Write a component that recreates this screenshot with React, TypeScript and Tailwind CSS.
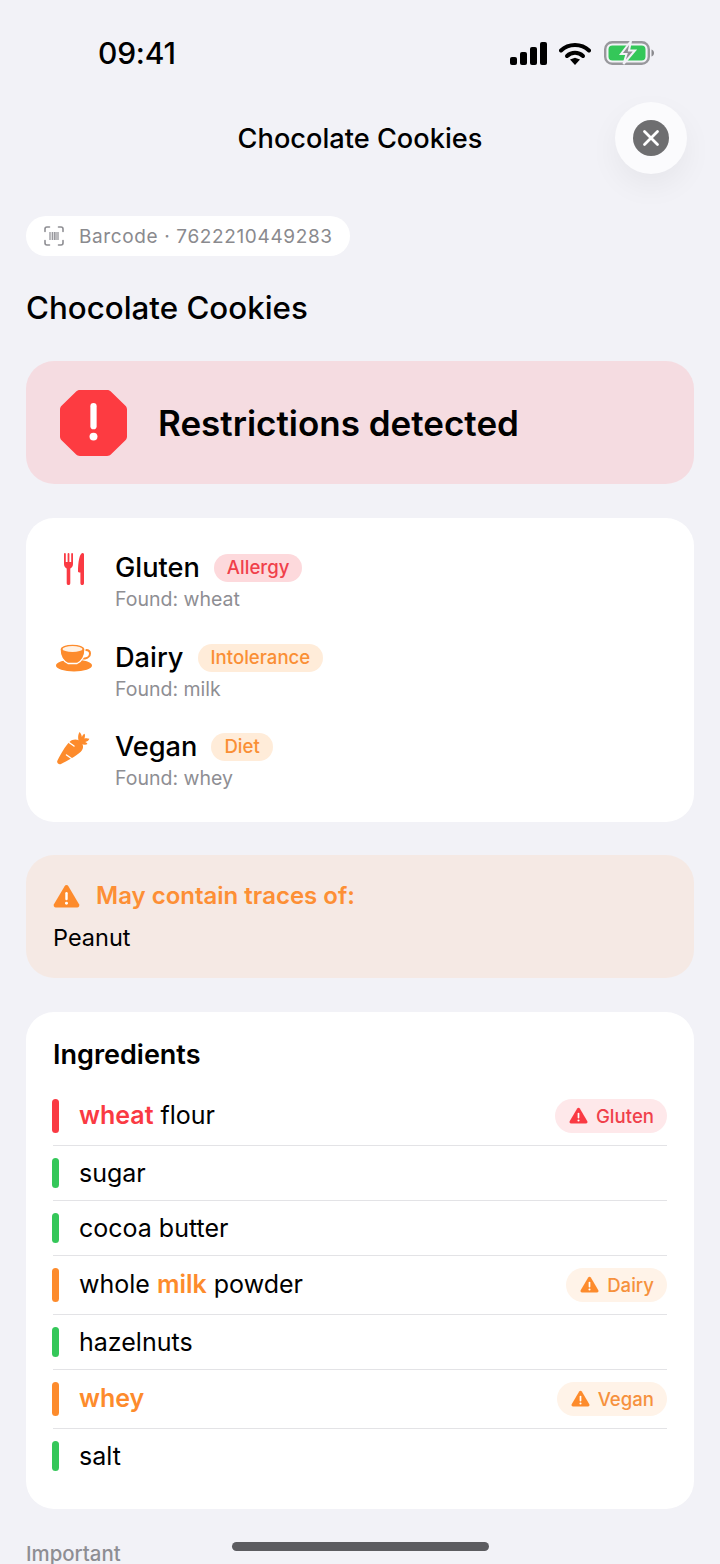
import React from "react";

const RED = "#fa3a43";
const ORANGE = "#fd8b2c";
const GREEN = "#34c759";

function Tri({ color, size = 20 }: { color: string; size?: number }) {
  return (
    <svg width={size} height={size * 0.9} viewBox="0 0 20 18" className="shrink-0">
      <path d="M10 .8c.6 0 1.100.3 1.400.8l7.900 13.400c.6 1.100-.2 2.400-1.400 2.400H2.100c-1.200 0-2-1.300-1.400-2.400L8.600 1.600c.3-.5.8-.8 1.400-.8z" fill={color} />
      <rect x="9.100" y="6" width="1.800" height="6" rx="0.9" fill="#fff" />
      <circle cx="10" cy="14.300" r="1.100" fill="#fff" />
    </svg>
  );
}

function Fork() {
  return (
    <svg width="20" height="32" viewBox="0 0 20 32" className="ml-[8px]">
      <path d="M0 1a.9.9 0 0 1 1.800 0V9h1.800V1a.9.9 0 0 1 1.800 0V9h1.800V1a.9.9 0 0 1 1.800 0V11c0 2.200-1.100 3.800-2.700 4.400V30.300a1.800 1.800 0 0 1-3.600 0V15.400C1.100 14.800 0 13.200 0 11z" fill={RED} />
      <path d="M18.500 0c.8 0 1.500.6 1.500 1.400V30.300a1.800 1.800 0 0 1-3.600 0V19.500h-1.200c-.8 0-1.200-.5-1.200-1.200C14 10 15.500 0 18.500 0z" fill={RED} />
    </svg>
  );
}

function Cup() {
  return (
    <svg width="36" height="28" viewBox="0 0 36 28">
      <ellipse cx="18" cy="21.500" rx="18" ry="6" fill={ORANGE} />
      <path d="M28 6h2c2.500 0 4 1.300 4 3.500S32 14 29 14.500h-3" fill="none" stroke={ORANGE} strokeWidth="2" />
      <path d="M4 5C4 2 10 0 16.500 0S29 2 29 5c0 7-3 12-8 14.500h-9C7 17 4 12 4 5z" fill={ORANGE} stroke="#fff" strokeWidth="1.300" />
      <ellipse cx="16.500" cy="5" rx="10" ry="3" fill="#fff1e3" />
    </svg>
  );
}

function Carrot() {
  return (
    <svg width="34" height="34" viewBox="0 0 34 34">
      <path d="M2 32.500c-1.200-1-1-2.200-.4-3.200C5 23 9 15 14 10.500c3-2.700 8-2.700 11 .5 2.800 3 2.700 7-.2 9.800C19.500 25.500 11 30 5 33c-1 .5-2.200.4-3-.5z" fill={ORANGE} />
      <path d="M22.500 9.500C21.800 6.500 22 3.500 23.500 1c1.300 1 2.100 3 2.400 5 .5-1.500 1.400-2.700 2.600-3.300.8 1.400.6 3.200-.1 4.900 1.500-.6 3.200-.6 5 .2-.7 1.700-2.300 2.900-4.200 3.300 1.100.5 1.800 1.100 2.300 2-2 1.100-4.600.7-6.500-.6-1-.8-1.800-1.800-2.500-3z" fill={ORANGE} />
      <path d="M13 11.500l5 3.500M10.500 24l5 3.500" stroke="#fff" strokeWidth="1.500" strokeLinecap="round" />
    </svg>
  );
}

function Restriction({ icon, name, tag, found, tone }: { icon: React.ReactNode; name: string; tag: string; found: string; tone: "red" | "orange" }) {
  return (
    <div className="flex">
      <div className="w-[62px] h-[33px] mt-[1px] flex items-center pl-[3px] shrink-0">{icon}</div>
      <div>
        <div className="flex items-center gap-[14px] h-[34px]">
          <span className="text-[27.2px] leading-[34px] font-medium text-black">{name}</span>
          <span className={tone === "red" ? "h-[28px] rounded-full px-[13px] text-[18.6px] leading-[27px] font-medium bg-[#fdd9dc] text-[#f0404a]" : "h-[28px] rounded-full px-[13px] text-[18.6px] leading-[27px] font-medium bg-[#ffecd9] text-[#fa8f35]"}>{tag}</span>
        </div>
        <div className="text-[19.5px] leading-[26px] text-[#8e8e93] mt-[1px]">{found}</div>
      </div>
    </div>
  );
}

function Row({ bar, children, badge, last }: { bar: string; children: React.ReactNode; badge?: { label: string; tone: "red" | "orange" }; last?: boolean }) {
  return (
    <div className={last ? "flex items-stretch py-[12px]" : "flex items-stretch py-[12px] border-b border-[#e3e3e6]"}>
      <div className="w-[7px] rounded-full ml-[-1px] mr-[20px] shrink-0" style={{ background: bar }} />
      <div className={badge ? "flex-1 text-[25px] leading-[30px] text-black self-center pb-[2px]" : "flex-1 text-[25px] leading-[30px] text-black self-center"}>{children}</div>
      {badge && (
        <div className={badge.tone === "red" ? "h-[34px] rounded-full flex items-center gap-[8px] pl-[14px] pr-[13px] bg-[#fee8ea]" : "h-[34px] rounded-full flex items-center gap-[8px] pl-[14px] pr-[13px] bg-[#fff3e8]"}>
          <Tri color={badge.tone === "red" ? RED : ORANGE} size={19} />
          <span className={badge.tone === "red" ? "text-[18.6px] pt-[1px] font-medium text-[#f0404a]" : "text-[18.6px] pt-[1px] font-medium text-[#f6913d]"}>{badge.label}</span>
        </div>
      )}
    </div>
  );
}

export default function App() {
  return (
    <div className="relative w-[720px] h-[1564px] overflow-hidden bg-[#f2f2f7]" style={{ fontFamily: "Inter, 'Noto Sans', sans-serif" }}>
      {/* status bar */}
      <div className="h-[102px] flex justify-between items-start pt-[34px] pl-[98px] pr-[66px]">
        <span className="text-[30px] leading-[38px] font-medium text-black tracking-[-0.2px]">09:41</span>
        <div className="flex items-center pt-[7px]">
          <svg width="37" height="23" viewBox="0 0 37 23" className="mr-[12px]">
            <rect x="0" y="15" width="7" height="8" rx="2" fill="#000" />
            <rect x="10" y="10" width="7" height="13" rx="2" fill="#000" />
            <rect x="20" y="5" width="7" height="18" rx="2" fill="#000" />
            <rect x="30" y="0" width="7" height="23" rx="2" fill="#000" />
          </svg>
          <svg width="32" height="23" viewBox="0 0 32 23" className="mr-[13px]">
            <path d="M2 8.500C9.500 1 22.500 1 30 8.500" stroke="#000" strokeWidth="4" fill="none" strokeLinecap="round" />
            <path d="M8 14c4.500-4.300 11.500-4.300 16 0" stroke="#000" strokeWidth="4" fill="none" strokeLinecap="round" />
            <path d="M11 17.500l5-1.800 5 1.800-5 5.500z" fill="#000" />
          </svg>
          <svg width="50" height="24" viewBox="0 0 50 24">
            <rect x="1.200" y="1.200" width="43.600" height="21.600" rx="7" fill="none" stroke="#98989c" strokeWidth="2.400" />
            <rect x="4.500" y="4.500" width="37" height="15" rx="4" fill={GREEN} />
            <path d="M47.500 8.500c1.500.5 2.500 1.800 2.500 3.500s-1 3-2.500 3.500z" fill="#8a8a8e" />
            <path d="M27 0L17 13h5.500L19.500 23 31 9.500h-6z" fill="#8f8f94" stroke="#f2f2f7" strokeWidth="2" />
          </svg>
        </div>
      </div>

      {/* nav */}
      <div className="grid grid-cols-[72px_1fr_72px] items-center px-[33px] h-[72px]">
        <div />
        <div className="text-center text-[27.2px] leading-[34px] pt-[1px] font-medium text-black">Chocolate Cookies</div>
        <div className="w-[72px] h-[72px] rounded-full bg-[#fbfbfd] flex items-center justify-center shadow-[0_12px_30px_rgba(0,0,0,0.05)]">
          <div className="w-[36px] h-[36px] rounded-full bg-[#6e6e70] flex items-center justify-center">
            <svg width="18" height="18" viewBox="0 0 18 18">
              <path d="M2.500 2.500l13 13M15.500 2.500l-13 13" stroke="#fff" strokeWidth="2.800" strokeLinecap="round" />
            </svg>
          </div>
        </div>
      </div>

      <div className="px-[26px] pt-[42px]">
        {/* barcode pill */}
        <div className="inline-flex items-center h-[40px] bg-white rounded-full pl-[18px] pr-[17px] gap-[15px]">
          <svg width="20" height="20" viewBox="0 0 20 20" fill="none">
            <path d="M1 5.500V3a2 2 0 0 1 2-2h2.500M14.500 1H17a2 2 0 0 1 2 2v2.500M19 14.500V17a2 2 0 0 1-2 2h-2.500M5.500 19H3a2 2 0 0 1-2-2v-2.500" stroke="#8e8e93" strokeWidth="1.600" strokeLinecap="round" />
            <path d="M6 6v8M8.300 6v8M10.300 6v8M12 6v8M14 6v8" stroke="#8e8e93" strokeWidth="1.200" />
          </svg>
          <span className="text-[19px] leading-[24px] pt-[1px] text-[#8a8a8e] tracking-[0.63px]">Barcode · 7622210449283</span>
        </div>

        <h1 className="text-[31.3px] leading-[38px] font-medium text-black mt-[33px]">Chocolate Cookies</h1>

        {/* restrictions detected */}
        <div className="mt-[34px] h-[123px] rounded-[28px] bg-[#f5dce1] flex items-center pl-[34px] gap-[31px]">
          <svg width="67" height="66" viewBox="1.500 1.500 64 63" className="shrink-0">
            <path d="M20.500 1.500h26c1.500 0 2.800.6 3.800 1.600L64 16.500c1 1 1.500 2.300 1.500 3.700v25.600c0 1.400-.5 2.700-1.500 3.700L50.300 62.900c-1 1-2.300 1.600-3.800 1.600h-26c-1.500 0-2.800-.6-3.800-1.600L3 49.500c-1-1-1.500-2.300-1.500-3.700V20.200c0-1.400.5-2.700 1.500-3.700L16.700 3.100c1-1 2.300-1.600 3.800-1.600z" fill="#fd3b41" />
            <rect x="30.500" y="14" width="6" height="25" rx="3" fill="#fff" />
            <circle cx="33.500" cy="46" r="3.800" fill="#fff" />
          </svg>
          <span className="text-[35px] leading-[44px] font-semibold text-black">Restrictions detected</span>
        </div>

        {/* restrictions */}
        <div className="mt-[34px] h-[304px] rounded-[28px] bg-white pt-[33px] pl-[27px] flex flex-col gap-[28.5px]">
          <Restriction icon={<Fork />} name="Gluten" tag="Allergy" found="Found: wheat" tone="red" />
          <Restriction icon={<Cup />} name="Dairy" tag="Intolerance" found="Found: milk" tone="orange" />
          <Restriction icon={<Carrot />} name="Vegan" tag="Diet" found="Found: whey" tone="orange" />
        </div>

        {/* traces */}
        <div className="mt-[33px] h-[123px] rounded-[28px] bg-[#f5e9e4] pt-[25px] pl-[27px]">
          <div className="flex items-center gap-[16px] h-[32px]">
            <Tri color={ORANGE} size={27} />
            <span className="text-[24px] leading-[32px] font-semibold text-[#fd8f35]">May contain traces of:</span>
          </div>
          <div className="text-[23.5px] leading-[32px] text-black mt-[10px]">Peanut</div>
        </div>

        {/* ingredients */}
        <div className="mt-[34px] rounded-[28px] bg-white pt-[26px] px-[27px] pb-[26px]">
          <div className="text-[27px] leading-[34px] font-semibold text-black mb-[15px]">Ingredients</div>
          <Row bar={RED} badge={{ label: "Gluten", tone: "red" }}>
            <span className="font-semibold text-[#fa3a43]">wheat</span> flour
          </Row>
          <Row bar={GREEN}>sugar</Row>
          <Row bar={GREEN}>cocoa butter</Row>
          <Row bar={ORANGE} badge={{ label: "Dairy", tone: "orange" }}>
            whole <span className="font-semibold text-[#fd8b2c]">milk</span> powder
          </Row>
          <Row bar={GREEN}>hazelnuts</Row>
          <Row bar={ORANGE} badge={{ label: "Vegan", tone: "orange" }}>
            <span className="font-semibold text-[#fd8b2c]">whey</span>
          </Row>
          <Row bar={GREEN} last>salt</Row>
        </div>

        <div className="mt-[35px] text-[20.4px] leading-[20px] font-medium text-[#8e8e93]">Important</div>
      </div>

      {/* home indicator */}
      <div className="absolute left-[232px] top-[1542px] w-[257px] h-[9px] rounded-full bg-[#5c5c60]" />
    </div>
  );
}
